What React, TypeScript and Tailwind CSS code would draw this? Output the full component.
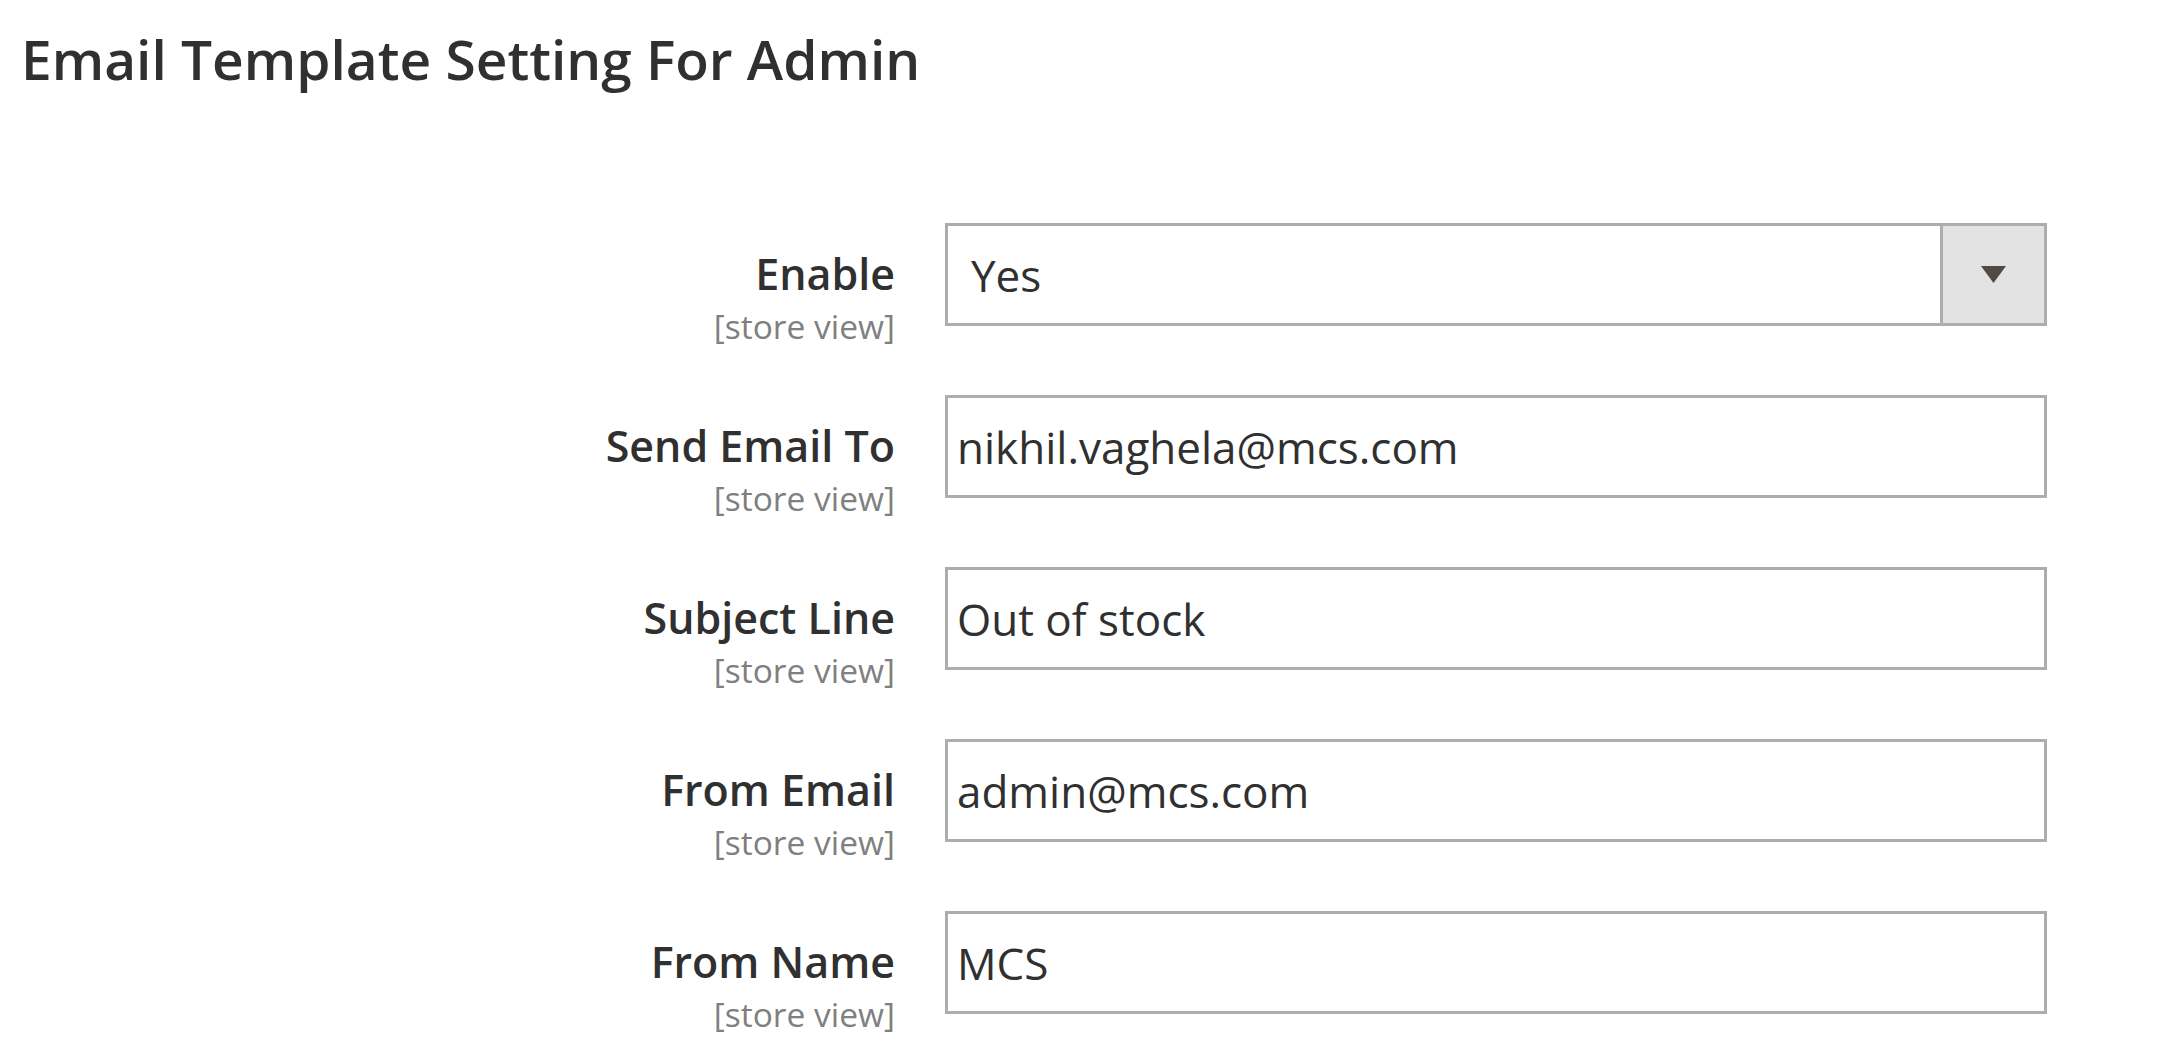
const fields = [
  { label: 'Enable', value: 'Yes', select: true },
  { label: 'Send Email To', value: 'nikhil.vaghela@mcs.com' },
  { label: 'Subject Line', value: 'Out of stock' },
  { label: 'From Email', value: 'admin@mcs.com' },
  { label: 'From Name', value: 'MCS' },
];

function Field({ label, value, select }: { label: string; value: string; select?: boolean }) {
  return (
    <div className="flex h-[103px] items-start">
      <div className="w-[895px] shrink-0 pt-[22px] text-right">
        <div className="text-[43px] font-semibold leading-[58px]">{label}</div>
        <div className="text-[33.5px] leading-[46px] text-[#808080]">[store view]</div>
      </div>
      <div className="ml-[50px] flex h-[103px] w-[1102px] shrink-0 border-[3px] border-[#adadad] bg-white">
        <div className={select ? 'flex flex-1 items-center pl-[23px] text-[44px]' : 'flex flex-1 items-center pl-[9px] text-[44px]'}>
          {value}
        </div>
        {select && (
          <div className="flex w-[104px] items-center justify-center border-l-[3px] border-[#adadad] bg-[#e3e3e3]">
            <svg width="25" height="17" viewBox="0 0 25 17">
              <polygon points="0,0 25,0 12.5,17" fill="#514943" />
            </svg>
          </div>
        )}
      </div>
    </div>
  );
}

export default function App() {
  return (
    <div className="h-screen overflow-hidden bg-white font-['Open_Sans',sans-serif] text-[#303030]">
      <h2 className="pl-[21px] pt-[21px] text-[55px] font-semibold leading-[75px]">
        Email Template Setting For Admin
      </h2>
      <div className="mt-[127px] flex flex-col gap-[69px]">
        {fields.map((f) => (
          <Field key={f.label} {...f} />
        ))}
      </div>
    </div>
  );
}
